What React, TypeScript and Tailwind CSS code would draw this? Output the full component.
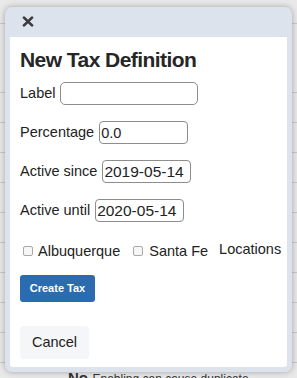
export default function App() {
  const rows = [...Array(9)];
  return (
    <div
      className="relative w-[297px] h-[378px] overflow-hidden bg-[#e9e9e9] text-[#222]"
      style={{ fontFamily: '"Liberation Sans", Arial, sans-serif' }}
    >
      {/* page behind the overlay */}
      <div className="h-[24px] border-b border-[#c9c9c9]" />
      <div className="h-[69px] border-b border-[#c9c9c9]" />
      {rows.map((_, i) => (
        <div key={i} className="h-[30px] border-b border-[#c9c9c9]" />
      ))}
      <div className="pl-[68px] pt-[6px] leading-[18px] text-[#333] whitespace-nowrap">
        <span className="font-bold text-[15px]">No</span>{" "}
        <span className="text-[12px]">Enabling can cause duplicate</span>
      </div>

      {/* modal */}
      <div className="absolute left-[5px] top-[7px] w-[287px] h-[365px] rounded-[7px] bg-[#dce3ec] shadow-[0_0_6px_rgba(0,0,0,0.3)] flex flex-col">
        <div className="h-[30px] shrink-0 flex items-start pl-[17px] pt-[9px]">
          <svg width="12" height="11" viewBox="0 0 12 11" className="text-[#3a3a3a]">
            <path
              d="M2 1.6 L10 9.4 M10 1.6 L2 9.4"
              stroke="currentColor"
              strokeWidth="2.7"
              strokeLinecap="round"
            />
          </svg>
        </div>
        <div className="flex-1 mx-[5px] mb-[5px] bg-white rounded-b-[3px] px-[10px] pt-[10px] text-[14.5px] overflow-hidden">
          <h3 className="text-[21px] leading-[26px] font-bold tracking-[-0.55px] text-[#262626]">
            New Tax Definition
          </h3>

          <div className="mt-[9px] flex items-center gap-[5px] h-[23px]">
            <span>Label</span>
            <input className="w-[138px] h-[23px] border border-[#8d8d8d] rounded-[5px] px-[2px] outline-none" />
          </div>

          <div className="mt-[16px] flex items-center gap-[5px] h-[23px]">
            <span>Percentage</span>
            <input
              defaultValue="0.0"
              className="w-[89px] h-[23px] border border-[#8d8d8d] rounded-[4px] px-[1px] outline-none"
            />
          </div>

          <div className="mt-[16px] flex items-center gap-[5px] h-[23px]">
            <span>Active since</span>
            <input
              defaultValue="2019-05-14"
              className="w-[89px] h-[23px] border border-[#8d8d8d] rounded-[4px] px-[1px] text-[15.5px] outline-none"
            />
          </div>

          <div className="mt-[16px] flex items-center gap-[5px] h-[23px]">
            <span>Active until</span>
            <input
              defaultValue="2020-05-14"
              className="w-[89px] h-[23px] border border-[#8d8d8d] rounded-[4px] px-[1px] text-[15.5px] outline-none"
            />
          </div>

          <div className="mt-[18px] flex items-start leading-[18px] whitespace-nowrap">
            <div className="mt-[2px] flex items-center pl-[3px] shrink-0">
              <span className="shrink-0 w-[10px] h-[10px] border border-[#a9a9a9] rounded-[2px] bg-[#f6f6f6]" />
              <span className="ml-[5px]">Albuquerque</span>
              <span className="shrink-0 ml-[13px] w-[10px] h-[10px] border border-[#a9a9a9] rounded-[2px] bg-[#f6f6f6]" />
              <span className="ml-[6px]">Santa Fe</span>
            </div>
            <span className="ml-[11px] shrink-0">Locations</span>
          </div>

          <button className="mt-[15px] block w-[75px] h-[27px] rounded-[3px] bg-[#2b6cb0] text-white text-[11px] font-bold">
            Create Tax
          </button>

          <button className="mt-[24px] block w-[69px] h-[33px] rounded-[4px] bg-[#f5f6f8] text-[#222]">
            Cancel
          </button>
        </div>
      </div>
    </div>
  );
}
